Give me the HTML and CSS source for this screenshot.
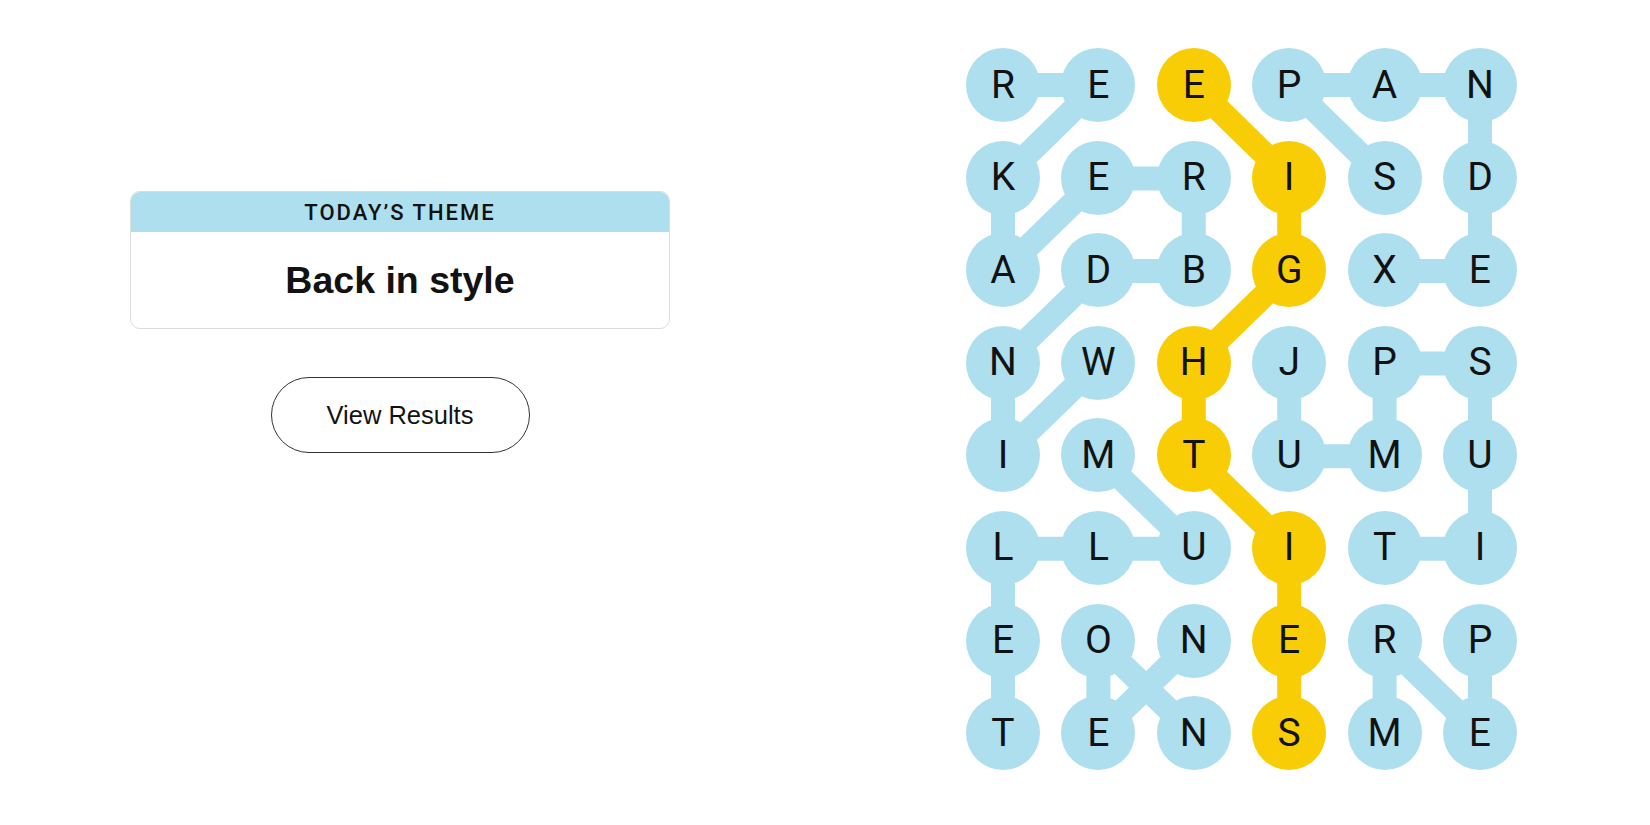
FILE: index.html
```html
<!DOCTYPE html>
<html lang="en">
<head>
<meta charset="utf-8">
<title>Strands</title>
<link rel="stylesheet" href="styles.css">
</head>
<body>
<main class="page">
  <section class="sidebar">
    <div class="theme-card">
      <div class="theme-head">TODAY’S THEME</div>
      <div class="theme-body">Back in style</div>
    </div>
    <button class="results-btn" type="button">View Results</button>
  </section>
  <section class="board">
    <svg class="links" viewBox="0 0 551 722.2" aria-hidden="true">
      <g stroke="#aedfee" stroke-width="24" stroke-linecap="round" stroke-linejoin="round" fill="none">
        <!-- WINDBREAKER -->
        <polyline points="132.4,315.6 37,408.2 37,315.6 132.4,223 227.8,223 227.8,130.4 132.4,130.4 37,223 37,130.4 132.4,37 37,37"/>
        <!-- SPANDEX -->
        <polyline points="418.6,130.4 323.2,37 418.6,37 514,37 514,130.4 514,223 418.6,223"/>
        <!-- JUMPSUIT -->
        <polyline points="323.2,315.6 323.2,408.2 418.6,408.2 418.6,315.6 514,315.6 514,408.2 514,500.8 418.6,500.8"/>
        <!-- MULLET -->
        <polyline points="132.4,408.2 227.8,500.8 132.4,500.8 37,500.8 37,593.4 37,686"/>
        <!-- NEON -->
        <polyline points="227.8,593.4 132.4,686 132.4,593.4 227.8,686"/>
        <!-- PERM -->
        <polyline points="514,593.4 514,686 418.6,593.4 418.6,686"/>
      </g>
      <polyline stroke="#f8cd05" stroke-width="24" stroke-linecap="round" stroke-linejoin="round" fill="none" points="227.8,37 323.2,130.4 323.2,223 227.8,315.6 227.8,408.2 323.2,500.8 323.2,593.4 323.2,686"/>
    </svg>
    <div class="cell">R</div><div class="cell">E</div><div class="cell gold">E</div><div class="cell">P</div><div class="cell">A</div><div class="cell">N</div>
    <div class="cell">K</div><div class="cell">E</div><div class="cell">R</div><div class="cell gold">I</div><div class="cell">S</div><div class="cell">D</div>
    <div class="cell">A</div><div class="cell">D</div><div class="cell">B</div><div class="cell gold">G</div><div class="cell">X</div><div class="cell">E</div>
    <div class="cell">N</div><div class="cell">W</div><div class="cell gold">H</div><div class="cell">J</div><div class="cell">P</div><div class="cell">S</div>
    <div class="cell">I</div><div class="cell">M</div><div class="cell gold">T</div><div class="cell">U</div><div class="cell">M</div><div class="cell">U</div>
    <div class="cell">L</div><div class="cell">L</div><div class="cell">U</div><div class="cell gold">I</div><div class="cell">T</div><div class="cell">I</div>
    <div class="cell">E</div><div class="cell">O</div><div class="cell">N</div><div class="cell gold">E</div><div class="cell">R</div><div class="cell">P</div>
    <div class="cell">T</div><div class="cell">E</div><div class="cell">N</div><div class="cell gold">S</div><div class="cell">M</div><div class="cell">E</div>
  </section>
</main>
</body>
</html>
```

FILE: styles.css
```css
* { box-sizing: border-box; }
html, body { margin: 0; padding: 0; background: #fff; }
body {
  font-family: "Liberation Sans", Arial, sans-serif;
  color: #121212;
  width: 1650px;
  height: 825px;
  overflow: hidden;
}
.page {
  display: flex;
  align-items: flex-start;
}
.sidebar {
  width: 540px;
  margin-left: 130px;
  padding-top: 191px;
  display: flex;
  flex-direction: column;
  align-items: center;
}
.theme-card {
  width: 100%;
  border: 1px solid #dcdcdc;
  border-radius: 10px;
  overflow: hidden;
}
.theme-head {
  background: #aedfee;
  height: 40px;
  display: flex;
  align-items: center;
  justify-content: center;
  font-family: Roboto, "Liberation Sans", sans-serif;
  font-size: 22px;
  font-weight: 500;
  letter-spacing: 2px;
  color: #121212;
}
.theme-body {
  height: 96px;
  display: flex;
  align-items: center;
  justify-content: center;
  font-size: 37.5px;
  font-weight: 700;
  color: #121212;
}
.results-btn {
  margin-top: 48px;
  width: 259px;
  height: 76px;
  border: 1px solid #333;
  border-radius: 38px;
  background: #fff;
  font-family: "Liberation Sans", Arial, sans-serif;
  font-size: 25.5px;
  color: #121212;
  padding: 0;
}
.board {
  position: relative;
  margin-left: 296px;
  margin-top: 48px;
  display: grid;
  grid-template-columns: repeat(6, 74px);
  grid-auto-rows: 74px;
  column-gap: 21.4px;
  row-gap: 18.6px;
}
.links {
  position: absolute;
  left: 0;
  top: 0;
  width: 551px;
  height: 722.2px;
}
.cell {
  position: relative;
  width: 74px;
  height: 74px;
  border-radius: 50%;
  background: #aedfee;
  display: flex;
  align-items: center;
  justify-content: center;
  font-family: Roboto, "Liberation Sans", sans-serif;
  font-size: 39px;
  line-height: 1;
  color: #121212;
}
.cell.gold { background: #f8cd05; }
```
